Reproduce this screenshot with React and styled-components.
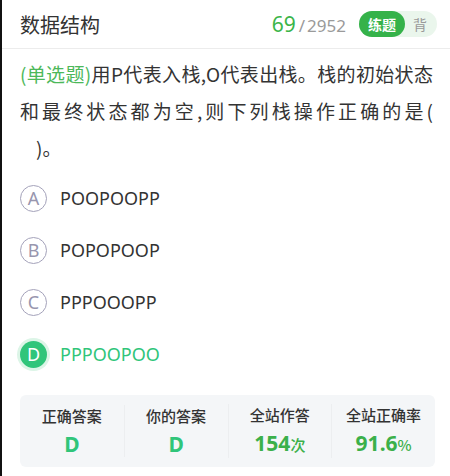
import React from "react";
import styled, { createGlobalStyle } from "styled-components";

const GlobalStyle = createGlobalStyle`
  html, body {
    margin: 0;
    padding: 0;
    background: #ffffff;
  }
  body {
    font-family: "Noto Sans CJK SC", "Noto Sans", sans-serif;
    color: #333333;
  }
`;

const Page = styled.div`
  width: 450px;
  height: 476px;
  box-sizing: border-box;
  border-left: 2px solid #111111;
  overflow: hidden;
`;

const Header = styled.div`
  height: 48px;
  display: flex;
  align-items: center;
  padding: 0 13px 0 18px;
  border-bottom: 1px solid #ececec;
`;

const Title = styled.div`
  flex: 1;
  font-size: 20px;
  color: #333333;
`;

const Counter = styled.div`
  display: flex;
  align-items: baseline;
  margin-right: 13px;
  font-family: "Noto Sans", sans-serif;
`;

const Current = styled.span`
  font-size: 21px;
  color: #3bb54a;
`;

const Total = styled.span`
  font-size: 17px;
  color: #9a9a9a;
  margin-left: 3px;
`;

const Slash = styled.span`
  margin-right: 2px;
`;

const Toggle = styled.div`
  display: flex;
  align-items: center;
  height: 26px;
  border-radius: 13px;
  background: #eaf6ec;
`;

const ToggleItem = styled.div`
  height: 26px;
  display: flex;
  align-items: center;
  justify-content: center;
  border-radius: 13px;
  font-size: 14px;
  padding: ${({ active }) => (active ? "0 9px" : "0 10px 0 8px")};
  background: ${({ active }) => (active ? "#35b24a" : "transparent")};
  color: ${({ active }) => (active ? "#ffffff" : "#999999")};
  font-weight: ${({ active }) => (active ? 700 : 400)};
`;

const Question = styled.div`
  margin: 6px 17px 0 18px;
  font-size: 19px;
  line-height: 37px;
  color: #333333;
`;

const Stem = styled.div`
  text-align: justify;
  text-align-last: justify;
`;

const Blank = styled.div`
  padding-left: 16px;
`;

const Tag = styled.span`
  color: #4cb85a;
`;

const Options = styled.div`
  margin-top: 6px;
  padding-left: 18px;
`;

const Option = styled.div`
  height: 52px;
  display: flex;
  align-items: center;
`;

const Badge = styled.div`
  width: 27px;
  height: 27px;
  border-radius: 50%;
  box-sizing: border-box;
  display: flex;
  align-items: center;
  justify-content: center;
  font-family: "Noto Sans", sans-serif;
  font-size: 18px;
  border: ${({ selected }) => (selected ? "none" : "1px solid #a4a2ba")};
  color: ${({ selected }) => (selected ? "#ffffff" : "#9896ae")};
  background: ${({ selected }) => (selected ? "#30c57a" : "transparent")};
  box-shadow: ${({ selected }) => (selected ? "0 0 0 3px #dcf5e7" : "none")};
`;

const OptionText = styled.div`
  margin-left: 13px;
  font-family: "Noto Sans", sans-serif;
  font-size: 18px;
  color: ${({ selected }) => (selected ? "#30c57a" : "#333333")};
`;

const Stats = styled.div`
  margin: 15px 15px 0 18px;
  height: 72px;
  border-radius: 6px;
  background: #f4f6f8;
  display: grid;
  grid-template-columns: repeat(4, 1fr);
  align-items: center;
`;

const Stat = styled.div`
  display: flex;
  flex-direction: column;
  align-items: center;
  gap: 4px;
  border-left: ${({ first }) => (first ? "none" : "1px solid #eceef0")};
`;

const StatLabel = styled.div`
  font-size: 15px;
  font-weight: 500;
  color: #333333;
  line-height: 22px;
`;

const StatValue = styled.div`
  font-family: "Noto Sans", sans-serif;
  font-size: 21px;
  font-weight: 700;
  line-height: 26px;
  color: ${({ tone }) => tone};
`;

const Unit = styled.span`
  font-size: 15px;
  font-weight: 500;
  font-family: "Noto Sans CJK SC", sans-serif;
`;

const options = [
  { key: "A", text: "POOPOOPP" },
  { key: "B", text: "POPOPOOP" },
  { key: "C", text: "PPPOOOPP" },
  { key: "D", text: "PPPOOPOO", selected: true },
];

const stats = [
  { label: "正确答案", value: "D", tone: "#30c57a" },
  { label: "你的答案", value: "D", tone: "#30c57a" },
  { label: "全站作答", value: "154", unit: "次", tone: "#3bb04a" },
  { label: "全站正确率", value: "91.6", unit: "%", tone: "#3bb04a" },
];

const App = () => {
  return (
    <>
      <GlobalStyle />
      <Page>
        <Header>
          <Title>数据结构</Title>
          <Counter>
            <Current>69</Current>
            <Total>
              <Slash>/</Slash>2952
            </Total>
          </Counter>
          <Toggle>
            <ToggleItem active>练题</ToggleItem>
            <ToggleItem>背</ToggleItem>
          </Toggle>
        </Header>
        <Question>
          <Stem>
            <Tag>(单选题)</Tag>用P代表入栈,O代表出栈。栈的初始状态和最终状态都为空,则下列栈操作正确的是(
          </Stem>
          <Blank>)。</Blank>
        </Question>
        <Options>
          {options.map((o) => (
            <Option key={o.key}>
              <Badge selected={o.selected}>{o.key}</Badge>
              <OptionText selected={o.selected}>{o.text}</OptionText>
            </Option>
          ))}
        </Options>
        <Stats>
          {stats.map((s, i) => (
            <Stat key={s.label} first={i === 0}>
              <StatLabel>{s.label}</StatLabel>
              <StatValue tone={s.tone}>
                {s.value}
                {s.unit && <Unit>{s.unit}</Unit>}
              </StatValue>
            </Stat>
          ))}
        </Stats>
      </Page>
    </>
  );
};

export default App;
